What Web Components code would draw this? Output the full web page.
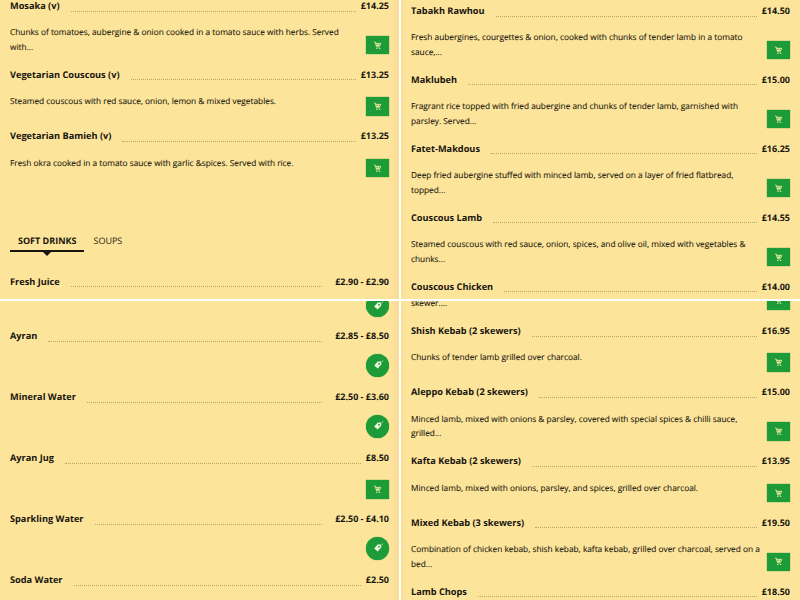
<!DOCTYPE html>
<html lang="en"><head><meta charset="utf-8"><title>Menu</title>
<style>
html,body{margin:0;padding:0;background:#fff}
body{width:800px;height:600px;overflow:hidden;font-family:"Open Sans","Noto Sans",sans-serif;color:#1b1a12;text-rendering:geometricPrecision;-webkit-font-smoothing:antialiased}
</style></head><body>
<menu-board>
<menu-panel side="left" offset="-2">
  <menu-item name="Mosaka (v)" price="£14.25" btn="cart">Chunks of tomatoes, aubergine &amp; onion cooked in a tomato sauce with herbs. Served with...</menu-item>
  <menu-item name="Vegetarian Couscous (v)" price="£13.25" btn="cart">Steamed couscous with red sauce, onion, lemon &amp; mixed vegetables.</menu-item>
  <menu-item name="Vegetarian Bamieh (v)" price="£13.25" btn="cart">Fresh okra cooked in a tomato sauce with garlic &amp;spices. Served with rice.</menu-item>
  <menu-tabs active="SOFT DRINKS" other="SOUPS"></menu-tabs>
  <menu-item name="Fresh Juice" price="£2.90 - £2.90" range></menu-item>
</menu-panel>
<menu-panel side="right" offset="3">
  <menu-item name="Tabakh Rawhou" price="£14.50" btn="cart">Fresh aubergines, courgettes &amp; onion, cooked with chunks of tender lamb in a tomato sauce,...</menu-item>
  <menu-item name="Maklubeh" price="£15.00" btn="cart">Fragrant rice topped with fried aubergine and chunks of tender lamb, garnished with parsley. Served...</menu-item>
  <menu-item name="Fatet-Makdous" price="£16.25" btn="cart">Deep fried aubergine stuffed with minced lamb, served on a layer of fried flatbread, topped...</menu-item>
  <menu-item name="Couscous Lamb" price="£14.55" btn="cart">Steamed couscous with red sauce, onion, spices, and olive oil, mixed with vegetables &amp; chunks...</menu-item>
  <menu-item name="Couscous Chicken" price="£14.00"></menu-item>
</menu-panel>
<menu-panel side="left" offset="-8" style="--h:45px">
  <menu-tail btn="tag"></menu-tail>
  <menu-item name="Ayran" price="£2.85 - £8.50" range btn="tag"></menu-item>
  <menu-item name="Mineral Water" price="£2.50 - £3.60" range btn="tag"></menu-item>
  <menu-item name="Ayran Jug" price="£8.50" btn="cart"></menu-item>
  <menu-item name="Sparkling Water" price="£2.50 - £4.10" range btn="tag"></menu-item>
  <menu-item name="Soda Water" price="£2.50"></menu-item>
</menu-panel>
<menu-panel side="right" offset="-10">
  <menu-tail btn="cart">skewer....</menu-tail>
  <menu-item name="Shish Kebab (2 skewers)" price="£16.95" btn="cart">Chunks of tender lamb grilled over charcoal.</menu-item>
  <menu-item name="Aleppo Kebab (2 skewers)" price="£15.00" btn="cart">Minced lamb, mixed with onions &amp; parsley, covered with special spices &amp; chilli sauce, grilled...</menu-item>
  <menu-item name="Kafta Kebab (2 skewers)" price="£13.95" btn="cart">Minced lamb, mixed with onions, parsley, and spices, grilled over charcoal.</menu-item>
  <menu-item name="Mixed Kebab (3 skewers)" price="£19.50" btn="cart">Combination of chicken kebab, shish kebab, kafta kebab, grilled over charcoal, served on a bed...</menu-item>
  <menu-item name="Lamb Chops" price="£18.50"></menu-item>
</menu-panel>
</menu-board>
<script>
const ICONS={
cart:`<svg width="9" height="9" viewBox="0 0 10 10" fill="none" stroke="#dfe697" stroke-width="1.1"><path d="M1.2 1.3h1.4l1.3 5.2h3.7"/><path d="M3 2.6h5.6L7.7 5H3.6"/><path d="M4.4 2.6l.5 2.4M6.4 2.6L6.1 5"/><circle cx="4.3" cy="8.2" r=".8" fill="#dfe697" stroke="none"/><circle cx="7.4" cy="8.2" r=".8" fill="#dfe697" stroke="none"/></svg>`,
tag:`<svg width="12" height="12" viewBox="0 0 13 13"><path fill="#eef5dc" fill-rule="evenodd" d="M6.2 2.6h3.4l.6 3.2-4 4.6L2.4 7z M7.6 4.2a.95.95 0 1 0 .01 0z"/><path d="M10.3 3.2l1.7-1.4" stroke="#eef5dc" stroke-width=".9"/></svg>`};
function def(name,css,render){customElements.define(name,class extends HTMLElement{
  connectedCallback(){if(this.shadowRoot)return;const r=this.attachShadow({mode:'open'});r.innerHTML=`<style>${css}</style>${render(this)}`;}
});}
def('menu-board',`:host{display:grid;grid-template-columns:399px 399px;grid-template-rows:299px 299px;gap:2px;width:800px;height:600px;background:#fff}`,()=>`<slot></slot>`);
def('menu-panel',`:host{display:block;overflow:hidden;background:#fde49b;min-width:0;min-height:0}
:host([side=left]){background:linear-gradient(to right,#fde49b 0,#fde49b 390px,#f8da97 399px)}
:host([side=right]){background:linear-gradient(to right,#f9dd98 0,#fde49b 4px)}
.in{padding:0 10px}`,h=>`<div class="in" style="margin-top:${h.getAttribute('offset')}px"><slot></slot></div>`);
const btnCss=`.b{display:flex;align-items:center;justify-content:center;width:23px;height:18.5px;background:#1e9b39;box-shadow:0 0 1px #1e9b39;flex:none}
.b.tag{height:23px;border-radius:50%}`;
const btn=t=>t?`<span class="b ${t}" role="button" aria-label="Add">${ICONS[t]}</span>`:'';
def('menu-item',`:host{display:block;font-size:8.3px}
.t{display:flex;height:16px;line-height:16px;font-size:9.2px;font-weight:700;color:#17150e}
.p{font-size:9px}
.d{flex:1;margin:0 5px 0 11px;border-bottom:1px dotted #bda765;height:12.5px}
:host([range]) .d{margin-right:13px}
.body{display:flex;gap:5px;min-height:var(--h,45.4px);box-sizing:border-box;align-items:flex-start}
.desc{flex:1;line-height:14.6px;padding:12.4px 0 11.4px;color:#1e1c10;-webkit-text-stroke:.12px #1e1c10}
.b{align-self:flex-end;margin-bottom:12.5px}
${btnCss}`,h=>{const b=h.getAttribute('btn');return `<div class="t"><span>${h.getAttribute('name')}</span><i class="d"></i><span class="p">${h.getAttribute('price')}</span></div><div class="body"><div class="desc"><slot></slot></div>${btn(b)}</div>`});
def('menu-tail',`:host{display:block;font-size:8.3px;color:#1e1c10;-webkit-text-stroke:.12px #1e1c10}
.r{display:flex;justify-content:space-between;align-items:flex-start;height:32px}
:host([btn=tag]) .r{height:35px}
:host([btn=tag]) .b{margin-top:1px}
.x{margin-top:6px;line-height:14px}
${btnCss}`,h=>`<div class="r"><span class="x"><slot></slot></span>${btn(h.getAttribute('btn'))}</div>`);
def('menu-tabs',`:host{display:flex;font-size:9px;line-height:14px;margin:44px 0 22px;color:#1f1d10}
.a,.o{padding:0 8px 2px;display:block;position:relative}
.a{font-weight:700;color:#17150e;border-bottom:2px solid #17150e}
.a::after{content:"";position:absolute;left:50%;margin-left:-4px;top:100%;margin-top:2px;border:4px solid transparent;border-bottom:0;border-top-color:#17150e}
.o{margin-left:1px}`,h=>`<span class="a">${h.getAttribute('active')}</span><span class="o">${h.getAttribute('other')}</span>`);
</script>
</body></html>
